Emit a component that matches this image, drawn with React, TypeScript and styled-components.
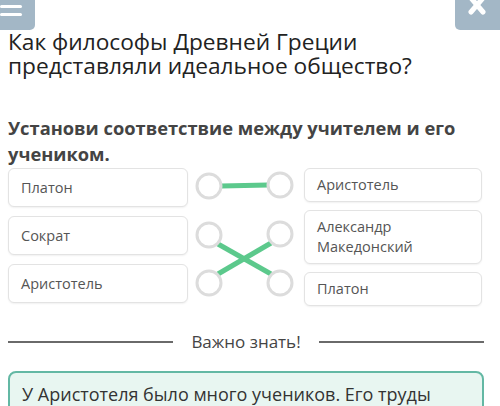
import React from "react";
import styled, { createGlobalStyle } from "styled-components";

const Global = createGlobalStyle`
  html, body { margin: 0; padding: 0; background: #fff; }
  body { font-family: "Open Sans", "Noto Sans", sans-serif; width: 500px; height: 406px; overflow: hidden; }
  * { box-sizing: border-box; }
`;

const Page = styled.div`
  width: 500px;
  height: 406px;
  overflow: hidden;
  display: flex;
  flex-direction: column;
`;

const TopBar = styled.div`
  display: flex;
  justify-content: space-between;
  align-items: flex-start;
  height: 30px;
  flex-shrink: 0;
`;

const CornerButton = styled.div<{ $side: "left" | "right"; $w: number }>`
  width: ${(p) => p.$w}px;
  height: 30px;
  background: #a3b7c6;
  border-radius: ${(p) => (p.$side === "left" ? "0 0 5px 0" : "0 0 0 5px")};
  position: relative;
  overflow: hidden;
`;

const Burger = styled.div<{ $top: number }>`
  position: absolute;
  left: 0;
  top: ${(p) => p.$top}px;
  width: 22px;
  height: 3px;
  background: #fff;
  border-radius: 2px;
`;

const Content = styled.div`
  padding: 0 16px 0 8px;
  display: flex;
  flex-direction: column;
`;

const Title = styled.h1`
  margin: 0;
  font-size: 22.7px;
  line-height: 24px;
  font-weight: 400;
  color: #222;
`;

const Subtitle = styled.h2`
  margin: 37px 0 0 0;
  font-size: 18.3px;
  line-height: 26px;
  font-weight: 700;
  color: #444;
`;

const Match = styled.div`
  display: grid;
  grid-template-columns: 180px 116px 178px;
  margin-top: 1px;
  align-items: start;
`;

const Column = styled.div<{ $gap: number }>`
  display: flex;
  flex-direction: column;
  gap: ${(p) => p.$gap}px;
`;

const Card = styled.div<{ $h: number }>`
  min-height: ${(p) => p.$h}px;
  border: 1px solid #e3e3e3;
  border-radius: 6px;
  box-shadow: 0 1px 2px rgba(0, 0, 0, 0.06);
  padding: 6px 12px;
  display: flex;
  align-items: center;
  font-size: 14.5px;
  line-height: 20px;
  color: #555;
  background: #fff;
`;

const Divider = styled.div`
  display: flex;
  align-items: center;
  gap: 18px;
  margin-top: 24px;
  font-size: 17px;
  line-height: 24px;
  color: #444;
  &::before, &::after {
    content: "";
    flex: 1;
    height: 2px;
    background: #6a6a6a;
  }
`;

const InfoBox = styled.div`
  margin-top: 17px;
  border: 2px solid #63b8a4;
  border-radius: 8px;
  background: #e8f6f1;
  padding: 8px 12px 20px 12px;
  font-size: 18px;
  line-height: 26px;
  color: #333;
`;

const GREEN = "#5cc98c";
const RING = "#dcdcdc";

const leftY = [18, 67, 115];
const rightY = [17, 66, 115];
const LX = 21;
const RX = 92;
const R = 12;

const Connectors = () => (
  <svg width="116" height="136" viewBox="0 0 116 136">
    <g stroke={GREEN} strokeWidth="5" strokeLinecap="butt">
      <line x1={LX + R} y1={leftY[0]} x2={RX - R} y2={rightY[0]} />
      <line x1={LX + 9} y1={leftY[1] + 9} x2={RX - 9} y2={rightY[2] - 9} />
      <line x1={LX + 9} y1={leftY[2] - 9} x2={RX - 9} y2={rightY[1] + 9} />
    </g>
    {leftY.map((y, i) => (
      <circle key={"l" + i} cx={LX} cy={y} r={R} fill="#fff" stroke={RING} strokeWidth="3" />
    ))}
    {rightY.map((y, i) => (
      <circle key={"r" + i} cx={RX} cy={y} r={R} fill="#fff" stroke={RING} strokeWidth="3" />
    ))}
  </svg>
);

export default function App() {
  return (
    <Page>
      <Global />
      <TopBar>
        <CornerButton $side="left" $w={35}>
          <Burger $top={5} />
          <Burger $top={13} />
        </CornerButton>
        <CornerButton $side="right" $w={45}>
          <svg width="45" height="30" viewBox="0 0 45 30" style={{ position: "absolute", left: 0, top: 0 }}>
            <g stroke="#fff" strokeWidth="5" strokeLinecap="round">
              <line x1="16" y1="-2" x2="28" y2="12" />
              <line x1="28" y1="-2" x2="16" y2="12" />
            </g>
          </svg>
        </CornerButton>
      </TopBar>
      <Content>
        <Title>
          Как философы Древней Греции
          <br />
          представляли идеальное общество?
        </Title>
        <Subtitle>Установи соответствие между учителем и его учеником.</Subtitle>
        <Match>
          <Column $gap={9}>
            <Card $h={39}>Платон</Card>
            <Card $h={39}>Сократ</Card>
            <Card $h={39}>Аристотель</Card>
          </Column>
          <Connectors />
          <Column $gap={8}>
            <Card $h={33}>Аристотель</Card>
            <Card $h={54}>
              Александр
              <br />
              Македонский
            </Card>
            <Card $h={33}>Платон</Card>
          </Column>
        </Match>
        <Divider>Важно знать!</Divider>
        <InfoBox>У Аристотеля было много учеников. Его труды</InfoBox>
      </Content>
    </Page>
  );
}
